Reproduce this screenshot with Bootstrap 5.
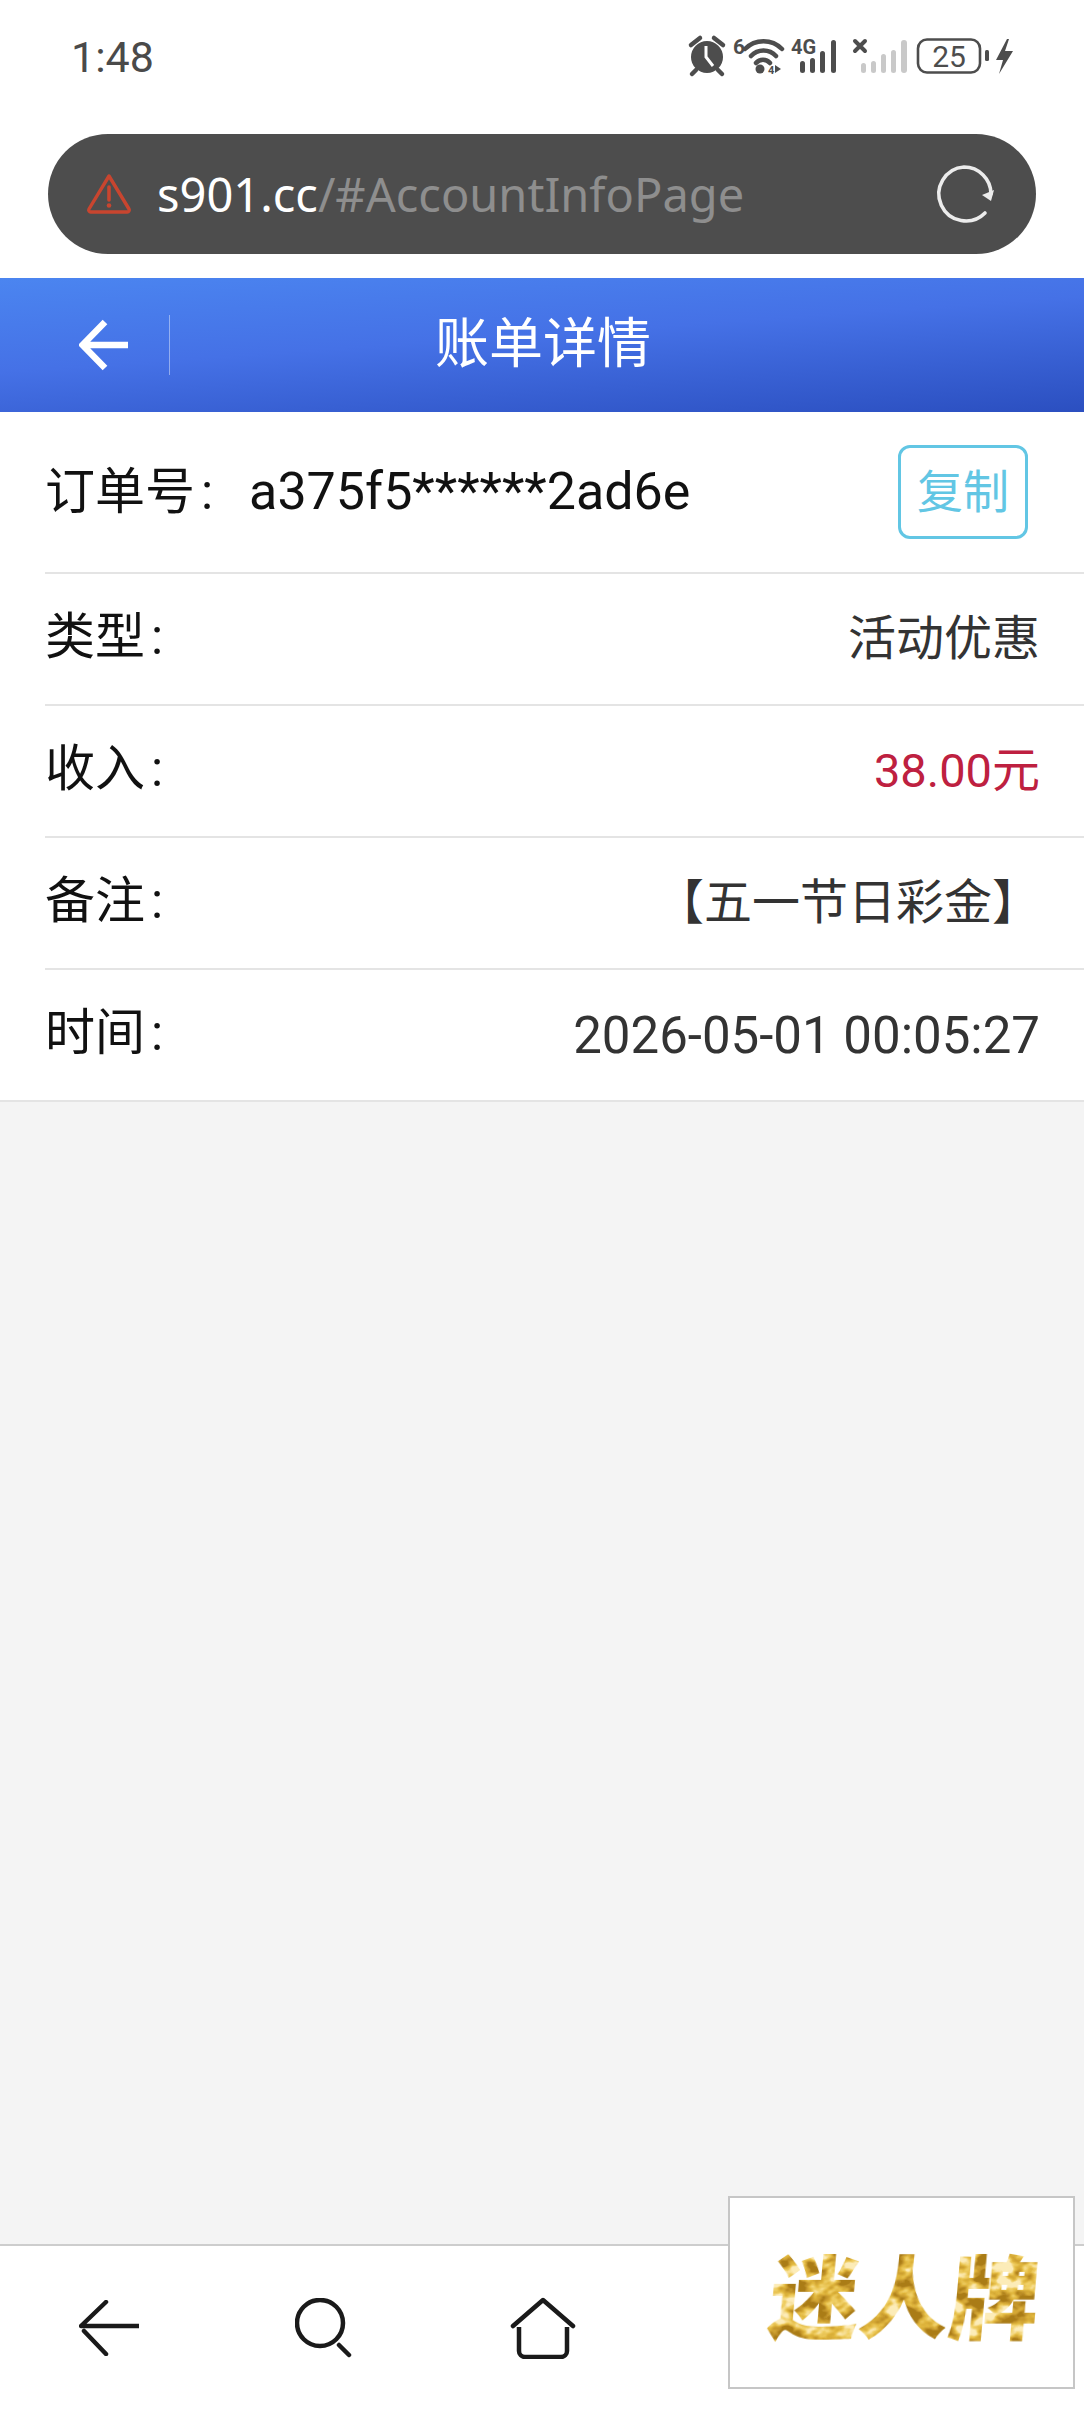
<!DOCTYPE html>
<html lang="zh">
<head>
<meta charset="utf-8">
<title>账单详情</title>
<link href="https://cdn.jsdelivr.net/npm/bootstrap@5.3.0/dist/css/bootstrap.min.css" rel="stylesheet">
<style>
html,body{margin:0;width:1084px;height:2412px;overflow:hidden}
body{font-family:Roboto,"Noto Sans CJK SC",sans-serif;background:#fff}
.phone{width:1084px;height:2412px;position:relative}
.statusline{height:134px;padding:34px 69px 0 71px}
.clock{font-size:43px;color:#4a4a4a;line-height:1;margin-top:2px}
.urlwrap{height:144px;padding:0 48px 24px}
.urlpill{height:120px;border-radius:60px;background:#4d4d4d;padding:0 41px 0 38px}
.urltext{font-family:"Noto Sans","Noto Sans CJK SC",sans-serif;font-size:47px;line-height:1;color:#fff;margin-left:25px;font-weight:400}
.urltext span{color:#8e8e8e}
.pagehead{height:134px;background:linear-gradient(176deg,#4b85f0 0%,#4571e6 45%,#2b4fc0 100%);padding:0}
.headback{width:170px;height:60px;border-right:1px solid rgba(255,255,255,.42);padding-left:79px}
.headtitle{font-size:54px;color:#fff;line-height:1;position:absolute;left:2px;right:0;text-align:center}
.detailbox{background:#fff;padding-left:45px;border-bottom:2px solid #e4e4e4}
.dline{height:132px;padding-right:44px;border-bottom:2px solid #e4e4e4;font-size:50px;line-height:1;color:#111}
.dline:first-child{height:162px}
.dline:last-child{border-bottom:0;height:130px}
.dlabel{margin-top:-4px}
.dcolon{margin-left:6px}
.dvalue{color:#333;font-size:48px}
.dnum{font-size:51px}
.dmoneynum{font-size:47px}
.orderno{font-size:52px;margin-left:36px}
.dmoney{color:#be2040}
.copybtn{width:130px;height:94px;border:3px solid #62c6e4;border-radius:12px;color:#62c6e4;font-size:46px;line-height:1;padding:0;background:#fff;margin-right:12px}
.fillarea{background:#f4f4f4}
.bottombar{height:168px;border-top:2px solid #cdcdcd;background:#fff;padding-left:79px}
.logobox{position:absolute;left:728px;top:2196px;width:347px;height:193px;background:#fff;border:2px solid #c6c6c6;padding-left:6px}
.goldword{font-family:"Noto Sans CJK SC",sans-serif;font-weight:900;font-size:90px;line-height:1;color:#c98a12;filter:url(#goldfx);transform:skewX(-5deg);white-space:nowrap}
</style>
</head>
<body>
<div class="phone d-flex flex-column">
  <svg width="0" height="0" class="position-absolute">
    <filter id="goldfx" x="0" y="0" width="100%" height="100%">
      <feTurbulence type="fractalNoise" baseFrequency="0.045 0.065" numOctaves="3" seed="7" result="n"/>
      <feColorMatrix in="n" type="matrix" values="3.2 0 0 0 -1.15  3.2 0 0 0 -1.15  3.2 0 0 0 -1.15  0 0 0 0 1" result="g"/>
      <feComponentTransfer in="g" result="c">
        <feFuncR type="table" tableValues="0.40 0.60 0.76 0.88 0.98"/>
        <feFuncG type="table" tableValues="0.20 0.34 0.48 0.64 0.84"/>
        <feFuncB type="table" tableValues="0.01 0.03 0.05 0.14 0.48"/>
      </feComponentTransfer>
      <feComposite in="c" in2="SourceAlpha" operator="in"/>
    </filter>
  </svg>

  <div class="statusline d-flex justify-content-between align-items-start">
    <div class="clock">1:48</div>
    <svg width="330" height="44" viewBox="0 0 330 44">
      <g fill="#4d4d4d">
        <circle cx="22" cy="23" r="16"/>
        <path d="M6 11l9-7M38 11l-9-7M11 36l-4 4M33 36l4 4" stroke="#4d4d4d" stroke-width="4.500" stroke-linecap="round"/>
        <path d="M21 12v11l7 9" stroke="#fff" stroke-width="3" fill="none"/>
        <text x="48" y="20" font-family="Roboto" font-size="21" font-weight="700">6</text>
        <path d="M60 15a26 26 0 0 1 37 0M66 22a17 17 0 0 1 25 0M71 29a9 9 0 0 1 14 0" fill="none" stroke="#4d4d4d" stroke-width="4.500" stroke-linecap="round"/>
        <circle cx="75" cy="35" r="4.500"/>
        <text x="83" y="40" font-family="Roboto" font-size="11" font-weight="700">4</text>
        <path d="M90 31l6 4-6 4z"/>
        <text x="106" y="20" font-family="Roboto" font-size="20" font-weight="700">4G</text>
        <rect x="115" y="27" width="5" height="12" rx="2.500"/>
        <rect x="125" y="24" width="5" height="15" rx="2.500"/>
        <rect x="135" y="17" width="5" height="22" rx="2.500"/>
        <rect x="146" y="6" width="5" height="33" rx="2.500"/>
        <path d="M170 7l10 10M180 7l-10 10" stroke="#4d4d4d" stroke-width="4" stroke-linecap="round"/>
      </g>
      <g fill="#c9c9c9">
        <rect x="176" y="29" width="5" height="10" rx="2.500"/>
        <rect x="186" y="27" width="5" height="12" rx="2.500"/>
        <rect x="196" y="20" width="5" height="19" rx="2.500"/>
        <rect x="206" y="16" width="5" height="23" rx="2.500"/>
        <rect x="216" y="6" width="6" height="33" rx="3"/>
      </g>
      <rect x="233" y="5.500" width="62" height="33" rx="9" fill="none" stroke="#4d4d4d" stroke-width="2.600"/>
      <text x="264" y="33" text-anchor="middle" font-family="Roboto" font-size="30" fill="#4d4d4d">25</text>
      <rect x="300" y="16" width="4" height="11" rx="1.500" fill="#4d4d4d"/>
      <path d="M322 5l-11 21h7l-4 14 14-23h-8l4-12z" fill="#4d4d4d"/>
    </svg>
  </div>

  <div class="urlwrap">
    <div class="urlpill d-flex align-items-center">
      <svg width="46" height="42" viewBox="0 0 46 42" fill="none">
        <path d="M23 3 L43 36 a2 2 0 0 1-2 3 H5 a2 2 0 0 1-2-3 Z" stroke="#c8452f" stroke-width="3.400" stroke-linejoin="round"/>
        <path d="M23 14v13" stroke="#c8452f" stroke-width="3.600" stroke-linecap="round"/>
        <circle cx="23" cy="32.500" r="2.300" fill="#c8452f"/>
      </svg>
      <div class="urltext flex-grow-1">s901.cc<span>/#AccountInfoPage</span></div>
      <svg width="62" height="62" viewBox="0 0 62 62" fill="none">
        <path d="M52 50A27 27 0 1 1 31 4a27 27 0 0 1 27 27" stroke="#ececec" stroke-width="3.600" stroke-linecap="round"/>
        <path d="M49 32l9 6 3-11z" fill="#ececec"/>
      </svg>
    </div>
  </div>

  <nav class="navbar pagehead align-items-center position-relative flex-nowrap justify-content-start">
    <div class="headback d-flex align-items-center">
      <svg width="52" height="52" viewBox="0 0 52 52" fill="none">
        <path d="M49 26H5M26 3L3.500 26 26 49" stroke="#fff" stroke-width="6.500" stroke-linejoin="miter"/>
      </svg>
    </div>
    <div class="headtitle">账单详情</div>
  </nav>

  <div class="detailbox">
    <div class="dline d-flex justify-content-between align-items-center">
      <div class="d-flex align-items-center"><span>订单号<span class="dcolon">:</span></span><span class="orderno">a375f5******2ad6e</span></div>
      <button type="button" class="btn copybtn">复制</button>
    </div>
    <div class="dline d-flex justify-content-between align-items-center"><span class="dlabel">类型<span class="dcolon">:</span></span><span class="dvalue">活动优惠</span></div>
    <div class="dline d-flex justify-content-between align-items-center"><span class="dlabel">收入<span class="dcolon">:</span></span><span class="dvalue dmoney"><span class="dmoneynum">38.00</span>元</span></div>
    <div class="dline d-flex justify-content-between align-items-center"><span class="dlabel">备注<span class="dcolon">:</span></span><span class="dvalue">【五一节日彩金】</span></div>
    <div class="dline d-flex justify-content-between align-items-center"><span class="dlabel">时间<span class="dcolon">:</span></span><span class="dvalue dnum">2026-05-01 00:05:27</span></div>
  </div>

  <div class="fillarea flex-grow-1"></div>

  <div class="bottombar d-flex align-items-center">
    <svg width="60" height="56" viewBox="0 0 60 56" fill="none" style="margin-top:-3px">
      <path d="M27 2L2 26h58" stroke="#1a1a1a" stroke-width="4.500" stroke-linecap="round" stroke-linejoin="round"/>
      <path d="M5 31l22 23" stroke="#1a1a1a" stroke-width="4.500" stroke-linecap="round"/>
    </svg>
    <svg width="60" height="60" viewBox="0 0 60 60" fill="none" style="margin-left:156px;margin-top:-3px">
      <circle cx="25" cy="25" r="23" stroke="#1a1a1a" stroke-width="4.500"/>
      <path d="M44 47l10 10" stroke="#1a1a1a" stroke-width="4.500" stroke-linecap="round"/>
    </svg>
    <svg width="66" height="62" viewBox="0 0 66 62" fill="none" style="margin-left:155px;margin-top:-3px">
      <path d="M3 29L33 3l30 26" stroke="#1a1a1a" stroke-width="4.500" stroke-linecap="round" stroke-linejoin="round"/>
      <path d="M9 30v24a6 6 0 0 0 6 6h36a6 6 0 0 0 6-6V30" stroke="#1a1a1a" stroke-width="4.500"/>
    </svg>
  </div>

  <div class="logobox d-flex align-items-center justify-content-center">
    <span class="goldword">迷人牌</span>
  </div>
</div>
<script src="https://cdn.jsdelivr.net/npm/bootstrap@5.3.0/dist/js/bootstrap.bundle.min.js"></script>
</body>
</html>
